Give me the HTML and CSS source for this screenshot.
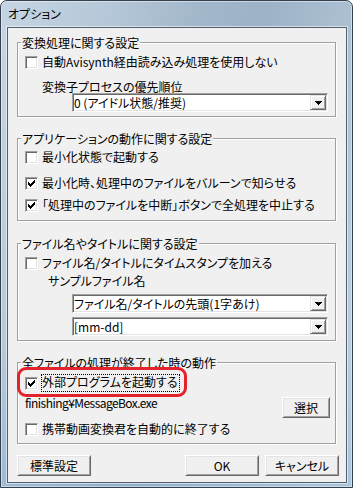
FILE: index.html
```html
<!DOCTYPE html>
<html lang="ja">
<head>
<meta charset="utf-8">
<title>オプション</title>
<link rel="stylesheet" href="styles.css">
</head>
<body>
<div class="window">
  <div class="titlebar">オプション</div>
  <div class="client">
    <div class="group g1">
      <div class="legend">変換処理に関する設定</div>
      <div class="row mt6">
        <span class="cb"></span><span class="lbl">自動Avisynth経由読み込み処理を使用しない</span>
      </div>
      <div class="text mt10 ml17">変換子プロセスの優先順位</div>
      <div class="combo"><span class="combo-text">0 (アイドル状態/推奨)</span><span class="drop"><svg width="7" height="4" viewBox="0 0 7 4" shape-rendering="crispEdges"><path d="M0 0h7v1h-7zM1 1h5v1h-5zM2 2h3v1h-3zM3 3h1v1h-1z" fill="#000"/></svg></span></div>
    </div>

    <div class="group g2">
      <div class="legend">アプリケーションの動作に関する設定</div>
      <div class="row mt5">
        <span class="cb"></span><span class="lbl">最小化状態で起動する</span>
      </div>
      <div class="row mt11">
        <span class="cb"><svg width="7" height="7" viewBox="0 0 7 7" shape-rendering="crispEdges"><path d="M6 0h1v1h-1zM5 1h2v1h-2zM0 2h1v1h-1zM4 2h3v1h-3zM0 3h2v1h-2zM3 3h3v1h-3zM0 4h5v1h-5zM1 5h3v1h-3zM2 6h1v1h-1z" fill="#000"/></svg></span><span class="lbl">最小化時、処理中のファイルをバルーンで知らせる</span>
      </div>
      <div class="row mt7">
        <span class="cb"><svg width="7" height="7" viewBox="0 0 7 7" shape-rendering="crispEdges"><path d="M6 0h1v1h-1zM5 1h2v1h-2zM0 2h1v1h-1zM4 2h3v1h-3zM0 3h2v1h-2zM3 3h3v1h-3zM0 4h5v1h-5zM1 5h3v1h-3zM2 6h1v1h-1z" fill="#000"/></svg></span><span class="lbl">「処理中のファイルを中断」ボタンで全処理を中止する</span>
      </div>
    </div>

    <div class="group g3">
      <div class="legend">ファイル名やタイトルに関する設定</div>
      <div class="row mt6">
        <span class="cb"></span><span class="lbl">ファイル名/タイトルにタイムスタンプを加える</span>
      </div>
      <div class="text mt3 ml23">サンプルファイル名</div>
      <div class="combo mt7"><span class="combo-text">ファイル名/タイトルの先頭(1字あけ)</span><span class="drop"><svg width="7" height="4" viewBox="0 0 7 4" shape-rendering="crispEdges"><path d="M0 0h7v1h-7zM1 1h5v1h-5zM2 2h3v1h-3zM3 3h1v1h-1z" fill="#000"/></svg></span></div>
      <div class="combo mt4"><span class="combo-text">[mm-dd]</span><span class="drop"><svg width="7" height="4" viewBox="0 0 7 4" shape-rendering="crispEdges"><path d="M0 0h7v1h-7zM1 1h5v1h-5zM2 2h3v1h-3zM3 3h1v1h-1z" fill="#000"/></svg></span></div>
    </div>

    <div class="group g4">
      <div class="legend">全ファイルの処理が終了した時の動作</div>
      <div class="row row-focus mt5">
        <span class="cb"><svg width="7" height="7" viewBox="0 0 7 7" shape-rendering="crispEdges"><path d="M6 0h1v1h-1zM5 1h2v1h-2zM0 2h1v1h-1zM4 2h3v1h-3zM0 3h2v1h-2zM3 3h3v1h-3zM0 4h5v1h-5zM1 5h3v1h-3zM2 6h1v1h-1z" fill="#000"/></svg></span><span class="lbl focus">外部プログラムを起動する</span>
        <span class="mark"></span>
      </div>
      <div class="path-row">
        <span class="fname">finishing¥MessageBox.exe</span>
        <button class="btn btn-small" type="button">選択</button>
      </div>
      <div class="row mt4">
        <span class="cb"></span><span class="lbl">携帯動画変換君を自動的に終了する</span>
      </div>
    </div>

    <div class="buttons">
      <button class="btn" type="button">標準設定</button>
      <button class="btn btn-ok" type="button">OK</button>
      <button class="btn btn-cancel" type="button">キャンセル</button>
    </div>
  </div>
</div>
</body>
</html>
```

FILE: styles.css
```css
html, body {
  margin: 0;
  padding: 0;
  background: #ffffff;
}

body {
  font-family: "Noto Sans CJK JP", "Liberation Sans", sans-serif;
  font-size: 12px;
  color: #000;
  font-feature-settings: "palt";
}

.window {
  box-sizing: border-box;
  width: 353px;
  height: 488px;
  border: 1px solid #34404d;
  border-radius: 7px 7px 0 0;
  padding: 0 5px 4px 6px;
  display: flex;
  flex-direction: column;
  background:
    linear-gradient(180deg, rgba(255,255,255,0) 70%, rgba(120,170,210,0.35) 100%),
    linear-gradient(105deg, #c5d5e3 0%, #b6c8d9 22%, #a3b7cb 42%, #9db2c7 55%, #aec1d3 75%, #c3d2df 100%);
  box-shadow: inset 0 0 0 1px rgba(255,255,255,0.45);
}

.titlebar {
  height: 26px;
  line-height: 26px;
  padding-left: 1px;
  flex: none;
}

.client {
  box-sizing: border-box;
  width: 340px;
  height: 456px;
  border: 1px solid #52606e;
  background: #f0f0f0;
  box-shadow: 0 0 0 1px rgba(255,255,255,0.55);
  padding: 0 7px 0 9px;
  flex: none;
}

.group {
  box-sizing: border-box;
  width: 319px;
  border: 1px solid #a0a0a0;
  box-shadow: inset 1px 1px #fff, 1px 1px #fff;
  padding: 0 0 0 7px;
}

.g1 { height: 75px; margin-top: 14px; }
.g2 { height: 83px; margin-top: 21px; }
.g3 { height: 98px; margin-top: 22px; }
.g4 { height: 82px; margin-top: 21px; }

.legend {
  width: max-content;
  margin: -7px 0 0 -4px;
  padding: 0 1px;
  line-height: 13px;
  background: #f0f0f0;
  white-space: nowrap;
}

.row {
  display: flex;
  align-items: center;
  height: 15px;
}

.mt3 { margin-top: 3px; }
.mt4 { margin-top: 4px; }
.mt5 { margin-top: 5px; }
.mt6 { margin-top: 6px; }
.mt7 { margin-top: 7px; }
.mt10 { margin-top: 10px; }
.mt11 { margin-top: 11px; }
.ml17 { margin-left: 17px; }
.ml23 { margin-left: 23px; }

.cb {
  box-sizing: border-box;
  width: 13px;
  height: 13px;
  flex: none;
  border: 1px solid;
  border-color: #a0a0a0 #fff #fff #a0a0a0;
  box-shadow: inset 1px 1px #696969, inset -1px -1px #e3e3e3;
  background: #fff;
  display: flex;
  align-items: center;
  justify-content: center;
}

.cb svg { display: block; }

.lbl {
  margin-left: 3px;
  border: 1px dotted transparent;
  line-height: 13px;
  padding-bottom: 2px;
  white-space: nowrap;
}

.row-focus {
  position: relative;
  height: 18px;
}

.focus {
  border-color: #000;
  line-height: 13px;
  padding: 0 1px 3px 0;
}

.mark {
  position: absolute;
  left: -8px;
  top: -7px;
  width: 170px;
  height: 30px;
  box-sizing: border-box;
  border: 3px solid #e4222b;
  border-radius: 9px;
}

.text {
  line-height: 13px;
  white-space: nowrap;
}

.combo {
  box-sizing: border-box;
  width: 256px;
  height: 19px;
  margin-left: 47px;
  border: 1px solid;
  border-color: #a0a0a0 #fff #fff #a0a0a0;
  box-shadow: inset 1px 1px #696969, inset -1px -1px #e3e3e3;
  background: #fff;
  padding: 1px;
  display: flex;
  align-items: center;
}

.combo-text {
  flex: 1;
  line-height: 15px;
  padding-bottom: 1px;
  white-space: nowrap;
  overflow: hidden;
}

.drop {
  box-sizing: border-box;
  width: 16px;
  height: 15px;
  flex: none;
  border: 1px solid;
  border-color: #e3e3e3 #696969 #696969 #e3e3e3;
  box-shadow: inset 1px 1px #fff, inset -1px -1px #a0a0a0;
  background: #f0f0f0;
  display: flex;
  align-items: center;
  justify-content: center;
}

.drop svg { display: block; }

.path-row {
  display: flex;
  justify-content: space-between;
  align-items: center;
  height: 21px;
  margin-top: 5px;
}

.fname {
  line-height: 13px;
  margin-bottom: 10px;
  letter-spacing: -0.55px;
  white-space: nowrap;
}

.btn {
  box-sizing: border-box;
  width: 74px;
  height: 21px;
  margin: 0;
  padding: 0;
  border: 1px solid;
  border-color: #fff #696969 #696969 #fff;
  box-shadow: inset 1px 1px #e3e3e3, inset -1px -1px #a0a0a0;
  background: #f0f0f0;
  font: inherit;
  font-feature-settings: "palt";
  color: #000;
  line-height: 17px;
  display: flex;
  align-items: center;
  justify-content: center;
}

.btn-small {
  width: 48px;
  margin-right: 5px;
}

.buttons {
  display: flex;
  margin-top: 11px;
}

.btn-ok { margin-left: auto; }
.btn-cancel { margin-left: 6px; }
```
